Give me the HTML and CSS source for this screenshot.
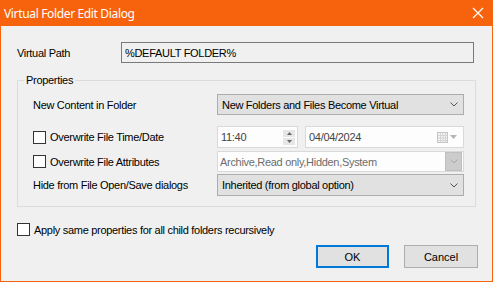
FILE: index.html
```html
<!DOCTYPE html>
<html lang="en">
<head>
  <meta charset="UTF-8">
  <title>Virtual Folder Edit Dialog</title>
  <link rel="stylesheet" href="styles.css">
</head>
<body>
  <div class="window">
    <!-- Barra de titulo -->
    <div class="titlebar">
      <span class="title">Virtual Folder Edit Dialog</span>
      <svg class="close" width="12" height="12" viewBox="0 0 12 12">
        <path d="M1 1 L11 11 M11 1 L1 11" stroke="#fff" stroke-width="1.2"/>
      </svg>
    </div>

    <div class="content">
      <div class="path-row">
        <span class="path-label">Virtual Path</span>
        <div class="path-box">%DEFAULT FOLDER%</div>
      </div>

      <!-- Grupo de propiedades -->
      <div class="group">
        <span class="legend">Properties</span>

        <div class="row row-content">
          <span class="row-label">New Content in Folder</span>
          <div class="combo">
            <span>New Folders and Files Become Virtual</span>
            <svg class="chev" width="8" height="5" viewBox="0 0 8 5"><path d="M0.5 0.5 L4 4 L7.5 0.5" fill="none" stroke="#555" stroke-width="1"/></svg>
          </div>
        </div>

        <div class="row row-time">
          <span class="row-label check-label"><span class="check"></span>Overwrite File Time/Date</span>
          <div class="time-box">
            <span>11:40</span>
            <div class="spin">
              <div class="spin-btn"><svg width="5" height="3" viewBox="0 0 5 3"><path d="M2.5 0 L5 3 L0 3 Z" fill="#666"/></svg></div>
              <div class="spin-btn"><svg width="5" height="3" viewBox="0 0 5 3"><path d="M0 0 L5 0 L2.5 3 Z" fill="#666"/></svg></div>
            </div>
          </div>
          <div class="date-box">
            <span>04/04/2024</span>
            <span class="date-icons">
              <svg width="11" height="11" viewBox="0 0 11 11">
                <rect x="0.5" y="0.5" width="10" height="10" fill="#f4f4f4" stroke="#c4c4c4"/>
                <path d="M0.5 3.5 H10.5 M0.5 6 H10.5 M0.5 8.5 H10.5 M3.5 0.5 V10.5 M6 0.5 V10.5 M8.5 0.5 V10.5" stroke="#d4d4d4"/>
              </svg>
              <svg width="7" height="4" viewBox="0 0 7 4"><path d="M0 0 L7 0 L3.5 4 Z" fill="#b4b4b4"/></svg>
            </span>
          </div>
        </div>

        <div class="row row-attr">
          <span class="row-label check-label"><span class="check"></span>Overwrite File Attributes</span>
          <div class="attr-box">
            <span>Archive,Read only,Hidden,System</span>
            <div class="attr-btn">
              <svg width="8" height="5" viewBox="0 0 8 5"><path d="M0.5 0.5 L4 4 L7.5 0.5" fill="none" stroke="#a8a8a8" stroke-width="1"/></svg>
            </div>
          </div>
        </div>

        <div class="row row-hide">
          <span class="row-label">Hide from File Open/Save dialogs</span>
          <div class="combo">
            <span>Inherited (from global option)</span>
            <svg class="chev" width="8" height="5" viewBox="0 0 8 5"><path d="M0.5 0.5 L4 4 L7.5 0.5" fill="none" stroke="#555" stroke-width="1"/></svg>
          </div>
        </div>
      </div>

      <div class="apply-row">
        <span class="check"></span>Apply same properties for all child folders recursively
      </div>

      <div class="buttons">
        <button class="btn btn-ok">OK</button>
        <button class="btn">Cancel</button>
      </div>
    </div>
  </div>
</body>
</html>
```

FILE: styles.css
```css
/* Base */
body {
  margin: 0;
  font-family: "Liberation Sans", Arial, sans-serif;
  font-size: 11px;
  letter-spacing: -0.3px;
  color: #000;
  background: #fff;
}
.window {
  width: 493px;
  height: 282px;
  box-sizing: border-box;
  border: 1px solid #f7630c;
  border-top: none;
  background: #f0f0f0;
}
/* Barra de titulo */
.titlebar {
  height: 26px;
  margin: 0 -1px;
  background: #f7630c;
  color: #fff;
  display: flex;
  align-items: center;
  justify-content: space-between;
  padding: 0 9px 0 4px;
}
.title {
  font-family: "Noto Sans", sans-serif;
  font-size: 12px;
  letter-spacing: -0.35px;
}
.content {
  padding: 16px 14px 0 16px;
}
/* Ruta virtual */
.path-row {
  display: flex;
  align-items: center;
}
.path-label {
  width: 104px;
}
.path-box {
  width: 353px;
  height: 21px;
  box-sizing: border-box;
  border: 1px solid #7a7a7a;
  padding: 0 3px;
  display: flex;
  align-items: center;
}
/* Grupo */
.group {
  position: relative;
  margin-top: 17px;
  width: 459px;
  height: 127px;
  box-sizing: border-box;
  border: 1px solid #dcdcdc;
  padding: 13px 11px 0 15px;
}
.legend {
  position: absolute;
  top: -7px;
  left: 6px;
  padding: 0 2px;
  background: #f0f0f0;
}
.row {
  display: flex;
  align-items: center;
}
.row-label {
  width: 184px;
  flex-shrink: 0;
}
.check-label {
  display: flex;
  align-items: center;
}
.check {
  width: 13px;
  height: 13px;
  box-sizing: border-box;
  border: 1px solid #333;
  background: #fff;
  margin-right: 4px;
  flex-shrink: 0;
}
.row-content {
  height: 21px;
}
.row-time {
  height: 22px;
  margin-top: 11px;
}
.row-attr {
  height: 21px;
  margin-top: 3px;
}
.row-hide {
  height: 22px;
  margin-top: 2px;
}
/* Combos */
.combo {
  width: 247px;
  height: 100%;
  box-sizing: border-box;
  background: #e1e1e1;
  border: 1px solid #adadad;
  display: flex;
  align-items: center;
  justify-content: space-between;
  padding: 0 5px 0 4px;
}
.time-box {
  width: 81px;
  height: 100%;
  box-sizing: border-box;
  border: 1px solid #d9d9d9;
  background: #fdfdfd;
  color: #444;
  display: flex;
  align-items: center;
  justify-content: space-between;
  padding: 0 2px 0 3px;
}
.spin {
  display: flex;
  flex-direction: column;
  gap: 1px;
}
.spin-btn {
  width: 12px;
  height: 7px;
  background: #e6e6e6;
  display: flex;
  align-items: center;
  justify-content: center;
}
.date-box {
  width: 159px;
  height: 100%;
  margin-left: 7px;
  box-sizing: border-box;
  border: 1px solid #d9d9d9;
  background: #fdfdfd;
  color: #444;
  display: flex;
  align-items: center;
  justify-content: space-between;
  padding: 0 6px 0 3px;
}
.date-icons {
  display: flex;
  align-items: center;
  gap: 2px;
}
.attr-box {
  width: 247px;
  height: 100%;
  box-sizing: border-box;
  border: 1px solid #d9d9d9;
  background: #fdfdfd;
  color: #6d6d6d;
  display: flex;
  align-items: center;
  justify-content: space-between;
  padding: 0 0 0 2px;
}
.attr-btn {
  width: 17px;
  height: 19px;
  margin-right: 1px;
  box-sizing: border-box;
  background: #cccccc;
  border: 1px solid #bfbfbf;
  display: flex;
  align-items: center;
  justify-content: center;
}
/* Casilla inferior */
.apply-row {
  display: flex;
  align-items: center;
  margin-top: 16px;
  height: 13px;
}
/* Botones */
.buttons {
  display: flex;
  justify-content: flex-end;
  gap: 15px;
  margin-top: 9px;
}
.btn {
  width: 74px;
  height: 23px;
  box-sizing: border-box;
  background: #e1e1e1;
  border: 1px solid #adadad;
  font-family: "Liberation Sans", Arial, sans-serif;
  font-size: 11px;
  color: #000;
  padding: 0;
}
.btn-ok {
  width: 73px;
  border: 2px solid #0078d7;
}
```
